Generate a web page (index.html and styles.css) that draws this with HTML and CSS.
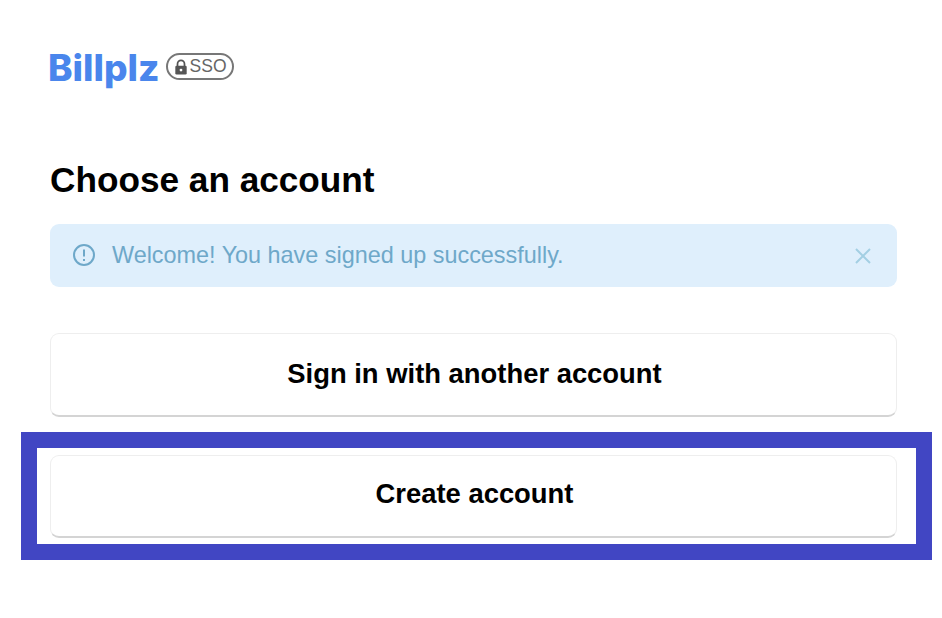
FILE: index.html
```html
<!DOCTYPE html>
<html>
<head>
    <link rel="stylesheet" href="styles.css">
</head>
<body>
<div class="container">
    <div class="brand">
        <span class="logo">Billplz</span>
        <span class="sso">
            <svg class="lock" viewBox="0 0 16 18" width="14" height="16">
                <path d="M4 8V5.5a4 4 0 0 1 8 0V8" fill="none" stroke="#555" stroke-width="2"/>
                <rect x="1.5" y="7.5" width="13" height="10" rx="1.5" fill="#555"/>
                <circle cx="8" cy="12.5" r="1.6" fill="#fff"/>
            </svg>SSO</span>
    </div>

    <h2>Choose an account</h2>

    <div class="alert">
        <svg class="alert-icon" viewBox="0 0 24 24" width="24" height="24">
            <circle cx="12" cy="12" r="10" fill="none" stroke="#6ea8c9" stroke-width="2"/>
            <path d="M12 6.5v7M12 16v2" fill="none" stroke="#6ea8c9" stroke-width="2"/>
        </svg>
        <span class="alert-text">Welcome! You have signed up successfully.</span>
        <svg class="alert-close" viewBox="0 0 16 16" width="16" height="16">
            <path d="M1 1l14 14M15 1L1 15" fill="none" stroke="#a3cfe3" stroke-width="2"/>
        </svg>
    </div>

    <a class="btn btn-first">Sign in with another account</a>
    <div class="highlight-wrap">
        <a class="btn btn-second">Create account</a>
        <div class="highlight"></div>
    </div>
</div>
</body>
</html>
```

FILE: styles.css
```css
html, body {
    margin: 0;
    background-color: #fff;
}
body {
    font-family: "Liberation Sans", Arial, sans-serif;
    color: #000;
    overflow: hidden;
}
.container {
    height: 618px;
    box-sizing: border-box;
    padding: 48px 45px 0 50px;
}
.brand {
    display: flex;
    align-items: center;
    gap: 6px;
    height: 40px;
    margin-left: -2px;
}
.logo {
    font-family: Inter, sans-serif;
    font-weight: 800;
    font-size: 37px;
    line-height: 40px;
    color: #4a86ec;
}
.sso {
    display: flex;
    align-items: center;
    box-sizing: border-box;
    width: 68px;
    height: 27px;
    margin-top: -3px;
    padding-left: 6px;
    border: 2px solid #777;
    border-radius: 14px;
    font-size: 17.5px;
    color: #666;
}
.lock {
    margin-right: 2px;
}
h2 {
    margin: 71px 0 0;
    font-size: 35.2px;
    line-height: 42px;
    font-weight: bold;
}
.alert {
    display: flex;
    align-items: center;
    height: 63px;
    margin-top: 23px;
    padding: 0 26px 0 22px;
    border-radius: 9px;
    background-color: #dfeffc;
}
.alert-icon {
    margin: 0 16px 2px 0;
}
.alert-text {
    flex: 1;
    font-size: 23.4px;
    color: #6ea8c9;
}
.btn {
    display: flex;
    align-items: center;
    justify-content: center;
    box-sizing: border-box;
    border: 1px solid #eee;
    border-bottom: 2px solid #d4d4d4;
    border-radius: 9px;
    background-color: #fff;
    font-size: 27.4px;
    font-weight: bold;
    cursor: pointer;
}
.btn-first {
    height: 84px;
    margin-top: 46px;
    padding: 0 0 1px 2px;
}
.btn-second {
    height: 83px;
    padding: 0 0 5px 2px;
}
.highlight-wrap {
    position: relative;
    margin-top: 38px;
}
.highlight {
    position: absolute;
    top: -23px;
    bottom: -22px;
    left: -29px;
    right: -35px;
    border: 16px solid #4146c3;
}
```
